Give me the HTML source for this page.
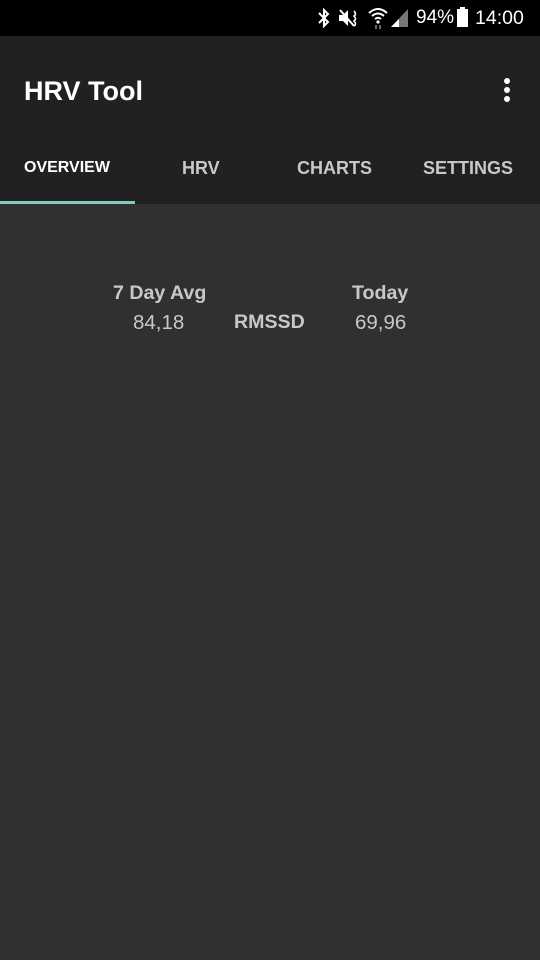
<!DOCTYPE html>
<html><head><meta charset="utf-8"><style>
*{margin:0;padding:0;box-sizing:border-box}
body{width:540px;height:960px;background:#303030;font-family:"Liberation Sans",sans-serif;position:relative;overflow:hidden}
.sb{position:absolute;top:0;left:0;width:540px;height:36px;background:#000;color:#fff}
.tb{position:absolute;top:36px;left:0;width:540px;height:168px;background:#212121}
.t{position:absolute;color:#fff;white-space:nowrap}
.g{color:#c8c8c8}
</style></head><body>
<div class="sb">
<svg style="position:absolute;left:316px;top:8px" width="16" height="20" viewBox="0 0 16 20"><path d="M3 5l9 9-4 4V2l4 4-9 9" fill="none" stroke="#fff" stroke-width="2"/></svg>
<svg style="position:absolute;left:338px;top:8px" width="22" height="20" viewBox="0 0 22 20"><path d="M1 7h4l5-5v16l-5-5H1z" fill="#fff"/><path d="M2 2l14 16" stroke="#fff" stroke-width="2"/><path d="M16 3q3 3 0 5q3 3 0 5q3 3 0 5" fill="none" stroke="#fff" stroke-width="1.6"/></svg>
<svg style="position:absolute;left:368px;top:7px" width="20" height="22" viewBox="0 0 20 22"><path d="M1 6q9-8 18 0M4 9q6-5 12 0M7 12q3-2.5 6 0" fill="none" stroke="#fff" stroke-width="2"/><circle cx="10" cy="15" r="1.6" fill="#fff"/><path d="M8 22v-4M12 22v-4" stroke="#888" stroke-width="1.5"/></svg>
<svg style="position:absolute;left:391px;top:9px" width="18" height="18" viewBox="0 0 18 18"><path d="M17 0V18H0z" fill="#777"/><path d="M8 10V18H0z" fill="#fff"/></svg>
<div class="t" style="left:416px;top:7px;font-size:19px">94%</div>
<div style="position:absolute;left:457px;top:9px;width:11px;height:18px;background:#fff"></div>
<div style="position:absolute;left:460px;top:7px;width:5px;height:3px;background:#fff"></div>
<div class="t" style="left:475px;top:7px;font-size:19.5px">14:00</div>
</div>
<div class="tb">
<div class="t" style="left:24px;top:40px;font-size:27px;font-weight:bold">HRV Tool</div>
<div style="position:absolute;left:504px;top:42px;width:6px;height:6px;border-radius:3px;background:#fff;box-shadow:0 9px 0 #fff,0 18px 0 #fff"></div>
<div class="t" style="left:24px;top:123px;font-size:16px;font-weight:bold">OVERVIEW</div>
<div class="t g" style="left:182px;top:122px;font-size:18px;font-weight:bold">HRV</div>
<div class="t g" style="left:297px;top:122px;font-size:18px;font-weight:bold">CHARTS</div>
<div class="t g" style="left:423px;top:122px;font-size:18px;font-weight:bold">SETTINGS</div>
<div style="position:absolute;left:0;top:165px;width:135px;height:3px;background:#80cbc4"></div>
</div>
<div class="t g" style="left:113px;top:282px;font-size:19.6px;font-weight:bold">7 Day Avg</div>
<div class="t g" style="left:133px;top:311px;font-size:20.5px">84,18</div>
<div class="t g" style="left:234px;top:311px;font-size:19.6px;font-weight:bold">RMSSD</div>
<div class="t g" style="left:352px;top:282px;font-size:19.6px;font-weight:bold">Today</div>
<div class="t g" style="left:355px;top:311px;font-size:20.5px">69,96</div>
</body></html>
